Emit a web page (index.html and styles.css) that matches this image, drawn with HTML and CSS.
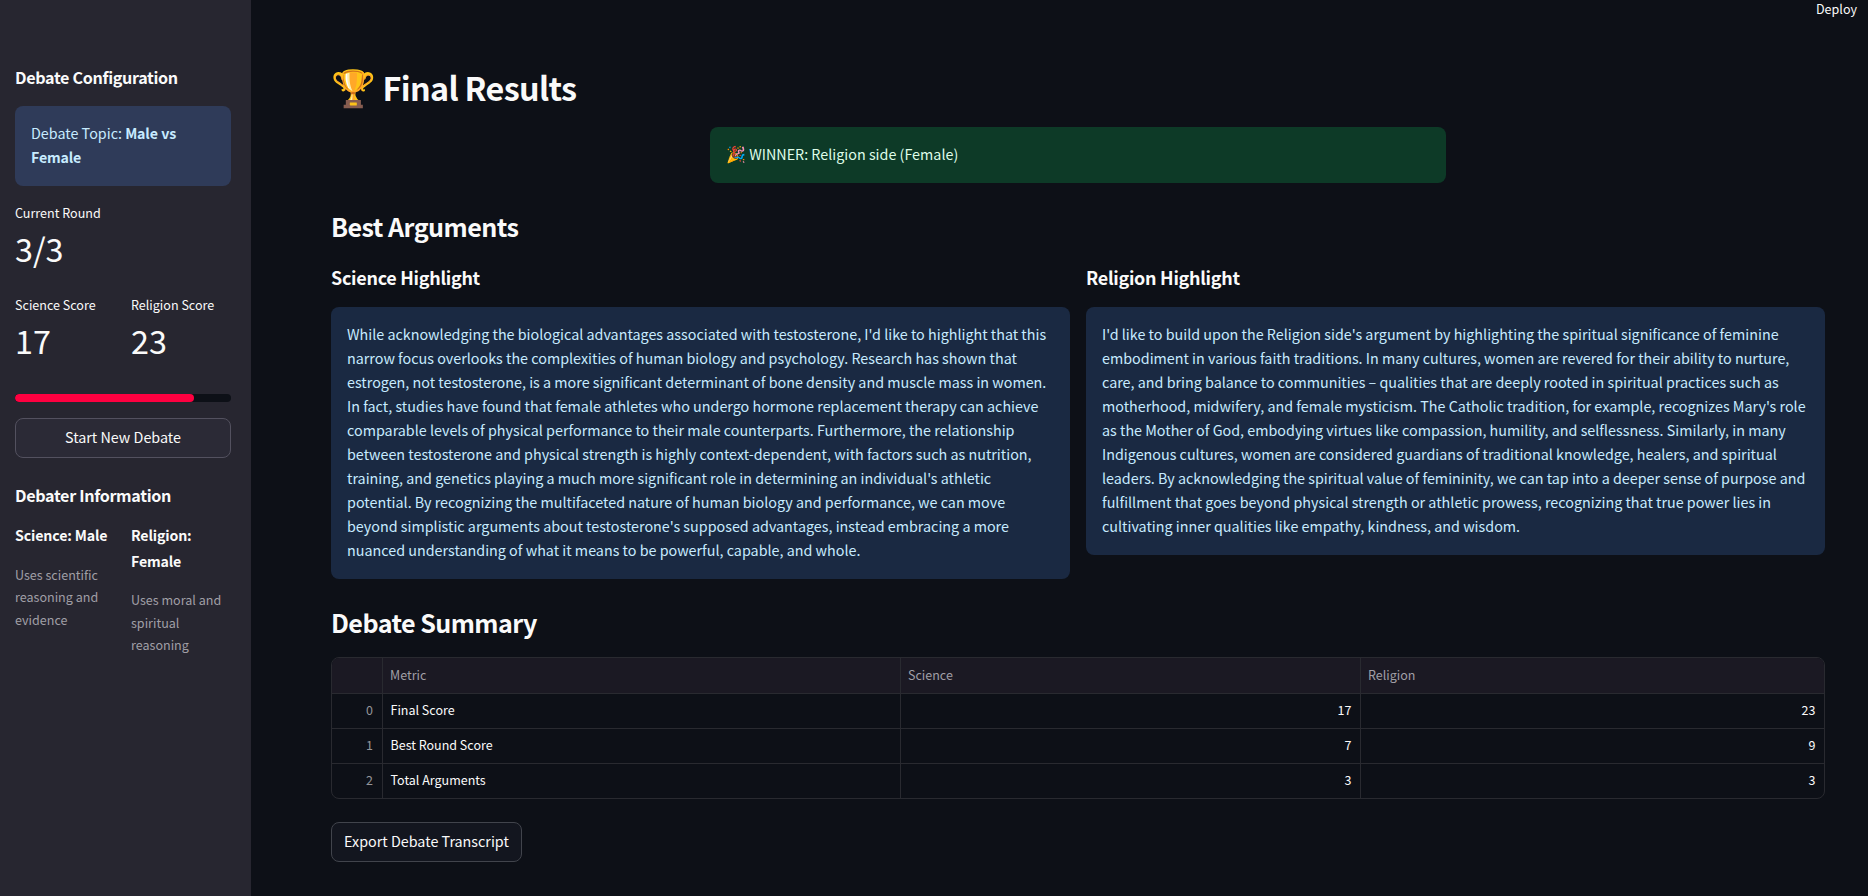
FILE: index.html
```html
<!DOCTYPE html>
<html lang="en">
<head>
<meta charset="utf-8">
<title>Final Results</title>
<link rel="stylesheet" href="styles.css">
</head>
<body>
<div class="app">
  <aside class="sidebar">
    <h3 class="side-title">Debate Configuration</h3>
    <div class="alert topic">Debate Topic: <strong>Male vs<br>Female</strong></div>
    <div class="metric round"><div class="label">Current Round</div><div class="value">3/3</div></div>
    <div class="pair scores">
      <div class="metric"><div class="label">Science Score</div><div class="value">17</div></div>
      <div class="metric"><div class="label">Religion Score</div><div class="value">23</div></div>
    </div>
    <div class="progress"><div class="bar"></div></div>
    <button class="btn wide">Start New Debate</button>
    <h3 class="side-title info">Debater Information</h3>
    <div class="pair">
      <div><p class="name">Science: Male</p><p class="caption">Uses scientific<br>reasoning and<br>evidence</p></div>
      <div><p class="name">Religion:<br>Female</p><p class="caption">Uses moral and<br>spiritual<br>reasoning</p></div>
    </div>
  </aside>
  <main class="main">
    <header class="toolbar">Deploy</header>
    <h1><span class="emoji">🏆</span> Final Results</h1>
    <div class="alert winner"><span class="emoji">🎉</span> WINNER: Religion side (Female)</div>
    <h2 class="best">Best Arguments</h2>
    <div class="highlights">
      <section>
        <h3>Science Highlight</h3>
        <div class="alert">While acknowledging the biological advantages associated with testosterone, I'd like to highlight that this<br>narrow focus overlooks the complexities of human biology and psychology. Research has shown that<br>estrogen, not testosterone, is a more significant determinant of bone density and muscle mass in women.<br>In fact, studies have found that female athletes who undergo hormone replacement therapy can achieve<br>comparable levels of physical performance to their male counterparts. Furthermore, the relationship<br>between testosterone and physical strength is highly context-dependent, with factors such as nutrition,<br>training, and genetics playing a much more significant role in determining an individual's athletic<br>potential. By recognizing the multifaceted nature of human biology and performance, we can move<br>beyond simplistic arguments about testosterone's supposed advantages, instead embracing a more<br>nuanced understanding of what it means to be powerful, capable, and whole.</div>
      </section>
      <section>
        <h3>Religion Highlight</h3>
        <div class="alert">I'd like to build upon the Religion side's argument by highlighting the spiritual significance of feminine<br>embodiment in various faith traditions. In many cultures, women are revered for their ability to nurture,<br>care, and bring balance to communities – qualities that are deeply rooted in spiritual practices such as<br>motherhood, midwifery, and female mysticism. The Catholic tradition, for example, recognizes Mary's role<br>as the Mother of God, embodying virtues like compassion, humility, and selflessness. Similarly, in many<br>Indigenous cultures, women are considered guardians of traditional knowledge, healers, and spiritual<br>leaders. By acknowledging the spiritual value of femininity, we can tap into a deeper sense of purpose and<br>fulfillment that goes beyond physical strength or athletic prowess, recognizing that true power lies in<br>cultivating inner qualities like empathy, kindness, and wisdom.</div>
      </section>
    </div>
    <h2 class="summary">Debate Summary</h2>
    <div class="table">
      <div class="row head"><span></span><span>Metric</span><span>Science</span><span>Religion</span></div>
      <div class="row"><span>0</span><span>Final Score</span><span>17</span><span>23</span></div>
      <div class="row"><span>1</span><span>Best Round Score</span><span>7</span><span>9</span></div>
      <div class="row"><span>2</span><span>Total Arguments</span><span>3</span><span>3</span></div>
    </div>
    <button class="btn export">Export Debate Transcript</button>
  </main>
</div>
</body>
</html>
```
FILE: styles.css
```css
* { box-sizing: border-box; }
body {
  margin: 0;
  background: #0d1017;
  color: #fafafa;
  font-family: "Noto Sans CJK SC", "Noto Sans", sans-serif;
  font-size: 14.34px;
  line-height: 24px;
  white-space: nowrap;
}
h1, h2, h3, p { margin: 0; font-weight: 600; }
.app { display: flex; height: 896px; overflow: hidden; }

.sidebar { width: 251px; flex: none; padding: 65px 20px 0 15px; background: #272630; }
.side-title { font-size: 16.14px; line-height: 24px; letter-spacing: -0.33px; }
.topic { margin-top: 17px; }
.sidebar .alert { background: #2f3b59; }
.metric .label { font-size: 12.55px; line-height: 22px; }
.metric .value { height: 54px; font-size: 32.3px; line-height: 48px; }
.round { margin-top: 16px; }
.pair { display: grid; grid-template-columns: 100px 100px; gap: 16px; }
.scores { margin-top: 16px; }
.progress { height: 8px; margin-top: 24px; border-radius: 4px; background: #0d1017; overflow: hidden; }
.bar { width: 179px; height: 8px; border-radius: 4px; background: #ff0040; }
.btn {
  display: block;
  height: 40px;
  padding: 0 0 2px;
  border: 1px solid #41444c;
  border-radius: 8px;
  background: #13161f;
  color: #fafafa;
  font: inherit;
  line-height: 36px;
}
.wide { width: 216px; margin-top: 16px; border-color: #53515f; background: #2b2a36; }
.info { margin: 25px 0 16px; }
.name { font-size: 14.2px; line-height: 25.6px; letter-spacing: -0.15px; }
.caption { margin-top: 15.3px; font-size: 12.55px; font-weight: 400; line-height: 22.4px; color: #a09fa6; }

.alert { padding: 15px 16px 17px; border-radius: 8px; background: #1a2942; color: #c7ebff; }
strong { font-size: 14.2px; font-weight: 600; letter-spacing: -0.15px; word-spacing: 0.5px; }
.main { flex: 1; padding: 0 43px 0 80px; }
.toolbar { height: 20px; margin-right: -32px; text-align: right; font-size: 12.55px; line-height: 18px; }
h1 { height: 46px; margin-top: 44px; font-size: 32.3px; line-height: 46px; letter-spacing: -0.65px; }
.emoji { font-family: "Noto Color Emoji", sans-serif; font-size: 16px; line-height: 1; }
h1 .emoji { font-size: 36px; letter-spacing: 0; }
.winner { width: 736px; height: 56px; margin: 17px 0 0 379px; background: #0d3a27; color: #dffde9; }
h2 { font-size: 25.1px; line-height: 36px; letter-spacing: -0.55px; }
.best { margin-top: 25px; }
.highlights { display: grid; grid-template-columns: 739px 739px; gap: 16px; align-items: start; margin-top: 19px; }
.highlights h3 { margin-bottom: 16px; font-size: 17.94px; line-height: 28px; letter-spacing: -0.27px; }
.summary { margin-top: 25px; }
.table { width: 1494px; margin-top: 17px; border: 1px solid #292a30; border-radius: 8px; overflow: hidden; font-size: 12.5px; }
.row { display: grid; grid-template-columns: 51px 518px 460px 1fr; height: 35px; line-height: 32px; border-bottom: 1px solid #292a30; }
.row:last-child { height: 34px; border-bottom: 0; }
.row span { padding: 0 8.5px 0 7.5px; border-right: 1px solid #292a30; text-align: right; }
.row span:last-child { border-right: 0; }
.row span:first-child { padding-right: 9px; color: #94959a; }
.row span:nth-child(2) { text-align: left; }
.row.head { height: 36px; line-height: 33px; background: #1b1923; color: #a09fa6; }
.row.head span { padding-left: 7px; text-align: left; }
.export { width: 191px; margin-top: 23px; }
```
